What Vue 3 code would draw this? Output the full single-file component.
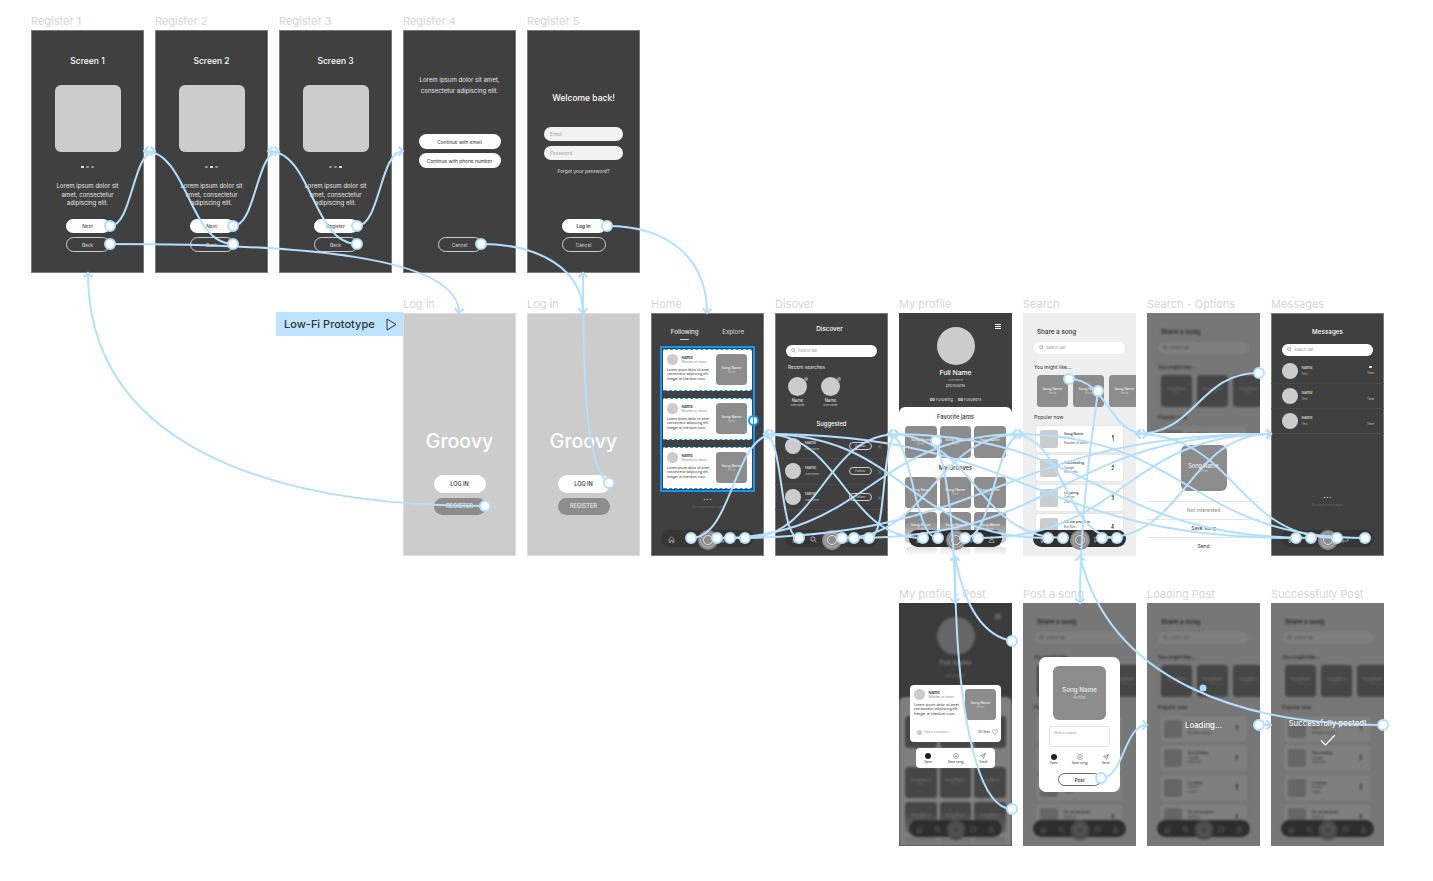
<template>
	<div class="canvas">
		<!-- icon set used by the screens -->
		<svg class="sprite" width="0" height="0">
			<symbol id="i-search" viewBox="0 0 12 12">
				<circle cx="5" cy="5" r="3.6" fill="none" stroke="currentColor" stroke-width="1.2" />
				<path d="M8 8l3 3" stroke="currentColor" stroke-width="1.2" />
			</symbol>
			<symbol id="i-home" viewBox="0 0 12 12">
				<path d="M2 11V5.5L6 2l4 3.5V11H7.5V8h-3v3z" fill="none" stroke="currentColor" stroke-width="1" />
			</symbol>
			<symbol id="i-chat" viewBox="0 0 12 12">
				<path d="M1.5 2h9v6.5H4.5L1.5 11z" fill="none" stroke="currentColor" stroke-width="1" />
			</symbol>
			<symbol id="i-user" viewBox="0 0 12 12">
				<circle cx="6" cy="3.6" r="2.2" fill="none" stroke="currentColor" stroke-width="1" />
				<path d="M1.5 11c.4-3.2 2-4.6 4.5-4.6s4.1 1.4 4.5 4.6z" fill="none" stroke="currentColor" stroke-width="1" />
			</symbol>
			<symbol id="i-down" viewBox="0 0 12 12">
				<circle cx="6" cy="6" r="5" fill="none" stroke="currentColor" stroke-width=".8" />
				<path d="M6 3v5M4 6.2L6 8.2l2-2" fill="none" stroke="currentColor" stroke-width=".8" />
			</symbol>
			<symbol id="i-send" viewBox="0 0 12 12">
				<path d="M11 1L1 5l4 1.8L7 11zM5 6.8L11 1" fill="none" stroke="currentColor" stroke-width=".8" />
			</symbol>
		</svg>

		<div class="proto-tag">
			<span>Low-Fi Prototype</span>
			<svg width="11" height="13" viewBox="0 0 11 13"><path d="M1 1l9 5.5-9 5.5z" fill="none" stroke="#333" stroke-width="1" /></svg>
		</div>

		<div v-for="f in frames" :key="f.x + '-' + f.y" class="slot" :style="{ left: f.x + 'px', top: f.y + 'px' }">
			<div class="label">{{ f.name }}</div>
			<div class="frame" :class="'bg-' + f.kind">
				<!-- onboarding -->
				<div v-if="f.kind === 'intro'" class="col intro">
					<div class="title">{{ f.title }}</div>
					<div class="art"></div>
					<div class="dots">
						<i v-for="n in 3" :key="n" :class="{ on: n - 1 === f.step }"></i>
					</div>
					<p class="blurb">Lorem ipsum dolor sit amet, consectetur adipiscing elit.</p>
					<div class="btn solid next">{{ f.next }}</div>
					<div class="btn ghost back">Back</div>
				</div>

				<div v-else-if="f.kind === 'reg4'" class="col reg4">
					<p class="blurb wide">Lorem ipsum dolor sit amet, consectetur adipiscing elit.</p>
					<div class="btn solid long first">Continue with email</div>
					<div class="btn solid long second">Continue with phone number</div>
					<div class="btn ghost back pushed">Cancel</div>
				</div>

				<div v-else-if="f.kind === 'reg5'" class="col reg5">
					<div class="title">Welcome back!</div>
					<div class="field first">Email</div>
					<div class="field second">Password</div>
					<div class="forgot">Forgot your password?</div>
					<div class="btn solid next pushed strong">Log In</div>
					<div class="btn ghost back">Cancel</div>
				</div>

				<div v-else-if="f.kind === 'login'" class="col login">
					<div class="logo">Groovy</div>
					<div class="lbtn white">LOG IN</div>
					<div class="lbtn grey">REGISTER</div>
				</div>

				<!-- home feed -->
				<div v-else-if="f.kind === 'home'" class="col home">
					<div class="tabs">
						<span class="tab active">Following</span>
						<span class="tab">Explore</span>
					</div>
					<div class="feed">
						<div v-for="n in 3" :key="n" class="post">
							<div class="post-main">
								<div class="post-head">
									<div class="ava"></div>
									<div>
										<div class="pname">Name</div>
										<div class="ptime">Minutes or hours</div>
									</div>
								</div>
								<p class="lorem">Lorem ipsum dolor sit amet, consectetur adipiscing elit. Integer at interdum nunc.</p>
							</div>
							<div class="thumb post-thumb"><b>Song Name</b><span>Artist</span></div>
						</div>
						<div class="selection"><span class="sel-handle"></span></div>
					</div>
					<div class="more">• • •</div>
					<div class="more-note">No more posts yet</div>
				</div>

				<div v-else-if="f.kind === 'discover'" class="col discover">
					<div class="head">Discover</div>
					<div class="search dark-search">
						<svg class="ic"><use href="#i-search" /></svg>
						<span>Search bar</span>
					</div>
					<div class="sub">Recent searches</div>
					<div class="recent">
						<div v-for="n in 2" :key="n" class="recent-item">
							<div class="rc-ava"><i></i></div>
							<div class="rc-name">Name</div>
							<div class="rc-user">username</div>
						</div>
					</div>
					<div class="suggested">Suggested</div>
					<div v-for="n in 3" :key="n" class="sg-row">
						<div class="sg-ava"></div>
						<div class="sg-text">
							<div>Name</div>
							<span>username</span>
						</div>
						<div class="follow">Follow</div>
						<div class="close">×</div>
					</div>
				</div>

				<div v-else-if="f.kind === 'messages'" class="col messages">
					<div class="head">Messages</div>
					<div class="search dark-search">
						<svg class="ic"><use href="#i-search" /></svg>
						<span>Search bar</span>
					</div>
					<div v-for="n in 3" :key="n" class="msg-row">
						<div class="sg-ava"></div>
						<div class="sg-text">
							<div>Name</div>
							<span>Text</span>
						</div>
						<div class="msg-time">
							<i :class="{ unread: n === 1 }"></i>
							<span>Time</span>
						</div>
					</div>
					<div class="more">• • •</div>
					<div class="more-note">No more messages</div>
				</div>

				<!-- screens with a dimmed base -->
				<div v-if="f.base === 'profile'" class="col base profile" :class="{ blurred: f.dim }">
					<div class="burger"><i></i><i></i><i></i></div>
					<div class="pf-top">
						<div class="pf-ava"></div>
						<div class="pf-name">Full Name</div>
						<div class="pf-user">username</div>
						<div class="pf-pro">pronouns</div>
						<div class="pf-count"><b>00</b> Following <b class="sp">00</b> Followers</div>
					</div>
					<div class="sheet">
						<div class="sheet-title">Favorite jams</div>
						<div class="grid">
							<div v-for="n in 3" :key="n" class="thumb"><b>Song Name</b><span>Artist</span></div>
						</div>
						<div class="sheet-title grooves">My Grooves</div>
						<div class="grid">
							<div v-for="n in 9" :key="n" class="thumb">
								<template v-if="n <= 6"><b>Song Name</b><span>Artist</span></template>
							</div>
						</div>
						<div class="fade"></div>
					</div>
				</div>

				<div v-if="f.base === 'share'" class="col base share" :class="{ blurred: f.dim }">
					<div class="head left">Share a song</div>
					<div class="search light-search">
						<svg class="ic"><use href="#i-search" /></svg>
						<span>Search bar</span>
					</div>
					<div class="sec first-sec">You might like...</div>
					<div class="suggest">
						<div v-for="n in 3" :key="n" class="thumb"><b>Song Name</b><span>Artist</span></div>
					</div>
					<div class="sec pop-sec">Popular now</div>
					<div v-for="s in popular" :key="s.rank" class="pop">
						<div class="pop-art"></div>
						<div class="pop-text">
							<b>{{ s.title }}</b>
							<span>{{ s.artist }}</span>
							<span>{{ s.posts }}</span>
						</div>
						<div class="pop-rank"><i></i>{{ s.rank }}</div>
					</div>
				</div>

				<div v-if="f.nav" class="nav" :class="{ blurred: f.dim }">
					<svg class="nav-ic"><use href="#i-home" /></svg>
					<svg class="nav-ic"><use href="#i-search" /></svg>
					<div class="disc"><i></i></div>
					<svg class="nav-ic"><use href="#i-chat" /></svg>
					<svg class="nav-ic"><use href="#i-user" /></svg>
				</div>

				<div v-if="f.dim" class="dim"></div>

				<!-- overlays on top of the dim -->
				<div v-if="f.kind === 'options'" class="opt-sheet">
					<div class="thumb opt-thumb"><b>Song Name</b><span>Artist</span></div>
					<div class="opt muted">Not interested</div>
					<div class="opt">Save song</div>
					<div class="opt">Send</div>
				</div>

				<div v-if="f.kind === 'profilePost'" class="pp">
					<div class="pp-card">
						<div class="post">
							<div class="post-main">
								<div class="post-head">
									<div class="ava"></div>
									<div>
										<div class="pname">Name</div>
										<div class="ptime">Minutes or hours</div>
									</div>
								</div>
								<p class="lorem">Lorem ipsum dolor sit amet, consectetur adipiscing elit. Integer at interdum nunc.</p>
							</div>
							<div class="thumb post-thumb"><b>Song Name</b><span>Artist</span></div>
						</div>
						<div class="pp-foot">
							<i class="mini-ava"></i>
							<span>Add a comment...</span>
							<em>00 likes</em>
							<svg width="6" height="6" viewBox="0 0 12 12"><path d="M6 11L1.5 6.2C-.5 3.5 3.5-.5 6 3c2.500-3.500 6.500.5 4.500 3.200z" fill="none" stroke="#555" stroke-width="1" /></svg>
						</div>
					</div>
					<div class="pp-actions">
						<div v-for="a in actions" :key="a.name" class="act">
							<svg v-if="a.icon" class="act-ic"><use :href="'#' + a.icon" /></svg>
							<i v-else class="act-open"></i>
							<span>{{ a.name }}</span>
						</div>
					</div>
				</div>

				<div v-if="f.kind === 'post'" class="compose">
					<div class="thumb big"><b>Song Name</b><span>Artist</span></div>
					<div class="caption">Write a caption</div>
					<div class="compose-acts">
						<div v-for="a in actions" :key="a.name" class="act">
							<svg v-if="a.icon" class="act-ic"><use :href="'#' + a.icon" /></svg>
							<i v-else class="act-open"></i>
							<span>{{ a.name }}</span>
						</div>
					</div>
					<div class="post-btn">Post</div>
				</div>

				<div v-if="f.kind === 'loading'" class="status">Loading...</div>
				<div v-if="f.kind === 'success'" class="status done">
					<span>Successfully posted!</span>
					<svg width="16" height="12" viewBox="0 0 16 12"><path d="M1 6.5L5.5 11 15 1" fill="none" stroke="#fff" stroke-width="1.2" /></svg>
				</div>
			</div>
		</div>

		<!-- prototype connections drawn above the frames -->
		<svg class="wires" width="1433" height="881">
			<path v-for="(w, i) in wires" :key="'w' + i" :d="w.d" class="wire" />
			<path v-for="(w, i) in wires" :key="'a' + i" :d="w.arrow" class="wire" />
			<circle v-for="(w, i) in wires" :key="'h' + i" :cx="w.from[0]" :cy="w.from[1]" r="5" class="knob" />
			<circle cx="1203" cy="688" r="3.5" fill="#a9dbff" />
		</svg>
	</div>
</template>

<script setup>
const frames = [
	{ name: 'Register 1', x: 31, y: 30, kind: 'intro', title: 'Screen 1', step: 0, next: 'Next' },
	{ name: 'Register 2', x: 155, y: 30, kind: 'intro', title: 'Screen 2', step: 1, next: 'Next' },
	{ name: 'Register 3', x: 279, y: 30, kind: 'intro', title: 'Screen 3', step: 2, next: 'Register' },
	{ name: 'Register 4', x: 403, y: 30, kind: 'reg4' },
	{ name: 'Register 5', x: 527, y: 30, kind: 'reg5' },
	{ name: 'Log in', x: 403, y: 313, kind: 'login' },
	{ name: 'Log in', x: 527, y: 313, kind: 'login' },
	{ name: 'Home', x: 651, y: 313, kind: 'home', nav: true },
	{ name: 'Disover', x: 775, y: 313, kind: 'discover', nav: true },
	{ name: 'My profile', x: 899, y: 313, kind: 'plain', base: 'profile', nav: true },
	{ name: 'Search', x: 1023, y: 313, kind: 'light', base: 'share', nav: true },
	{ name: 'Search - Options', x: 1147, y: 313, kind: 'options', base: 'share', dim: true },
	{ name: 'Messages', x: 1271, y: 313, kind: 'messages', nav: true },
	{ name: 'My profile - Post', x: 899, y: 603, kind: 'profilePost', base: 'profile', nav: true, dim: true },
	{ name: 'Post a song', x: 1023, y: 603, kind: 'post', base: 'share', nav: true, dim: true },
	{ name: 'Loading Post', x: 1147, y: 603, kind: 'loading', base: 'share', nav: true, dim: true },
	{ name: 'Successfully Post', x: 1271, y: 603, kind: 'success', base: 'share', nav: true, dim: true },
]

const popular = [
	{ rank: 1, title: 'Song Name', artist: 'Artist', posts: 'Number of posts' },
	{ rank: 2, title: 'Succeeding', artist: 'Tonight', posts: 'Artist info' },
	{ rank: 3, title: 'Locating', artist: 'Creator', posts: 'Listen' },
	{ rank: 4, title: 'On me program', artist: 'Bot Ruin', posts: 'Listen' },
]

const actions = [
	{ name: 'Open' },
	{ name: 'Save song', icon: 'i-down' },
	{ name: 'Send', icon: 'i-send' },
]

// arrow head at the end of a connection
const chevron = (x, y, dir) => {
	const s = 4.5
	if (dir === 'right') return `M${x - s} ${y - s}L${x} ${y}L${x - s} ${y + s}`
	if (dir === 'left') return `M${x + s} ${y - s}L${x} ${y}L${x + s} ${y + s}`
	if (dir === 'down') return `M${x - s} ${y - s}L${x} ${y}L${x + s} ${y - s}`
	return `M${x - s} ${y + s}L${x} ${y}L${x + s} ${y + s}`
}

// connection that leaves and lands sideways
const side = (x1, y1, x2, y2) => {
	const forward = x2 > x1
	const dx = Math.max(Math.abs(x2 - x1) / 2, 20) * (forward ? 1 : -1)
	return {
		from: [x1, y1],
		d: `M${x1} ${y1}C${x1 + dx} ${y1} ${x2 - dx} ${y2} ${x2} ${y2}`,
		arrow: chevron(x2, y2, forward ? 'right' : 'left'),
	}
}

const free = (x1, y1, c, x2, y2, dir) => ({
	from: [x1, y1],
	d: `M${x1} ${y1}C${c} ${x2} ${y2}`,
	arrow: chevron(x2, y2, dir),
})

const HOME_R = 764
const DISC_L = 775
const DISC_R = 888
const PROF_L = 899
const PROF_R = 1012
const SEARCH_L = 1023
const SEARCH_R = 1136
const OPT_L = 1147
const MSG_L = 1271

const navLinks = [
	[691, DISC_L], [717, SEARCH_L], [730, MSG_L], [745, PROF_L],
	[799, HOME_R], [842, SEARCH_L], [854, MSG_L], [869, PROF_L],
	[923, HOME_R], [938, DISC_R], [965, SEARCH_L], [978, MSG_L],
	[1048, HOME_R], [1063, DISC_R], [1102, MSG_L], [1117, PROF_R],
	[1296, HOME_R], [1311, DISC_R], [1337, SEARCH_R], [1365, PROF_R],
]

const wires = [
	side(110, 226, 155, 151),
	side(233, 244, 144, 151),
	side(233, 226, 279, 151),
	side(357, 244, 268, 151),
	side(357, 226, 403, 151),
	free(110, 244, '300 244 459 256', 459, 313, 'down'),
	free(485, 506, '260 506 88 440', 88, 273, 'up'),
	free(481, 244, '540 244 583 270', 583, 313, 'down'),
	free(609, 483, '588 470 583 400', 583, 273, 'up'),
	free(607, 226, '670 226 707 260', 707, 313, 'down'),
	...navLinks.map(([x, t]) => side(x, 538, t, 434)),
	free(936, 441, '950 480 955 550', 955, 603, 'down'),
	free(1098, 391, '1090 450 1080 520', 1080, 603, 'down'),
	side(1069, 379, OPT_L, 434),
	side(1259, 373, SEARCH_R, 434),
	free(1012, 641, '985 636 965 610', 955, 556, 'up'),
	free(1012, 809, '975 809 955 700', 955, 556, 'up'),
	free(1383, 725, '1240 725 1110 680', 1080, 556, 'up'),
	side(1101, 778, OPT_L, 725),
	side(1259, 725, 1271, 725),
]
</script>

<style scoped>
.canvas {
	position: relative;
	width: 1433px;
	height: 881px;
	overflow: hidden;
	background: #fff;
	font-family: Inter, 'Liberation Sans', sans-serif;
}

.sprite {
	position: absolute;
}

.proto-tag {
	position: absolute;
	left: 276px;
	top: 312px;
	width: 127px;
	height: 24px;
	box-sizing: border-box;
	padding: 0 6px 0 8px;
	background: #bde3ff;
	color: #333;
	font-size: 11px;
	font-weight: 500;
	display: flex;
	align-items: center;
	justify-content: space-between;
}

.slot {
	position: absolute;
	width: 113px;
}

.label {
	position: absolute;
	left: 0;
	top: -16px;
	font-size: 11px;
	line-height: 14px;
	color: #d6d6d6;
	white-space: nowrap;
}

.frame {
	position: relative;
	width: 113px;
	height: 243px;
	overflow: hidden;
	background: #404040;
	color: #fff;
	box-shadow: inset 0 0 0 1px #7a7a7a;
}

.bg-login {
	background: #ccc;
	box-shadow: inset 0 0 0 1px #ddd;
}

.bg-light,
.bg-options,
.bg-post,
.bg-loading,
.bg-success {
	background: #eee;
	box-shadow: none;
}

.col {
	display: flex;
	flex-direction: column;
	height: 100%;
	box-sizing: border-box;
}

.blurred {
	filter: blur(1px);
}

.dim {
	position: absolute;
	inset: 0;
	background: rgba(0, 0, 0, 0.5);
}

/* register screens */
.intro,
.reg4,
.reg5 {
	align-items: center;
	padding-bottom: 21px;
}

.intro {
	padding-top: 26px;
}

.title {
	font-size: 8.5px;
	line-height: 10px;
	font-weight: 500;
}

.art {
	width: 66px;
	height: 67px;
	margin-top: 19px;
	background: #ccc;
	border-radius: 6px;
}

.dots {
	display: flex;
	gap: 2.5px;
	margin-top: 14px;
}

.dots i {
	width: 2.5px;
	height: 2.5px;
	border-radius: 50%;
	background: #999;
}

.dots i.on {
	background: #fff;
}

.blurb {
	width: 68px;
	margin: 14px 0 0;
	font-size: 6.1px;
	line-height: 8.7px;
	text-align: center;
	color: #e8e8e8;
}

.blurb.wide {
	width: 100px;
	margin-top: 0;
	line-height: 11px;
}

.reg4 {
	padding-top: 44px;
}

.btn {
	display: flex;
	align-items: center;
	justify-content: center;
	box-sizing: border-box;
	border-radius: 8px;
	font-size: 4.8px;
}

.solid {
	background: #fff;
	color: #333;
}

.ghost {
	border: 0.5px solid #ccc;
	color: #ddd;
}

.next {
	width: 44px;
	height: 14px;
	margin-top: 11px;
}

.back {
	width: 44px;
	height: 15px;
	margin-top: 4px;
}

.long {
	width: 82px;
	height: 15px;
}

.first {
	margin-top: 38px;
}

.second {
	margin-top: 4px;
}

.pushed {
	margin-top: auto;
}

.strong {
	font-weight: 600;
}

.reg5 {
	padding-top: 63px;
}

.field {
	width: 79px;
	height: 14px;
	box-sizing: border-box;
	padding-left: 6px;
	background: #f2f2f2;
	border-radius: 7px;
	color: #aaa;
	font-size: 4.8px;
	line-height: 14px;
}

.field.first {
	margin-top: 24px;
}

.field.second {
	margin-top: 5px;
}

.forgot {
	margin-top: 8px;
	font-size: 4.8px;
	line-height: 6px;
	color: #ddd;
}

/* log in */
.login {
	align-items: center;
	padding-top: 116px;
}

.logo {
	font-size: 19.5px;
	line-height: 24px;
	font-weight: 500;
}

.lbtn {
	width: 52px;
	height: 17.5px;
	display: flex;
	align-items: center;
	justify-content: center;
	border-radius: 9px;
	font-size: 5.6px;
	font-weight: 500;
}

.lbtn.white {
	margin-top: 22px;
	background: #fff;
	color: #333;
}

.lbtn.grey {
	margin-top: 5px;
	background: #8c8c8c;
	color: #eee;
}

/* shared bits */
.thumb {
	display: flex;
	flex-direction: column;
	align-items: center;
	justify-content: center;
	background: #8c8c8c;
	border-radius: 3.5px;
	color: #eee;
	font-size: 3px;
	line-height: 4px;
	overflow: hidden;
	white-space: nowrap;
}

.thumb b {
	font-weight: 500;
	font-size: 3.6px;
}

.thumb span {
	color: #ccc;
}

.more {
	margin-top: 9px;
	font-size: 3.5px;
	line-height: 5px;
	text-align: center;
	color: #eee;
}

.more-note {
	margin-top: 2px;
	font-size: 3.5px;
	line-height: 5px;
	text-align: center;
	color: #6a6a6a;
}

.head {
	font-size: 6.3px;
	line-height: 8px;
	font-weight: 500;
	text-align: center;
}

.discover .head {
	padding-right: 4px;
}

.head.left {
	text-align: left;
	color: #333;
	padding-left: 3px;
}

.search {
	display: flex;
	align-items: center;
	gap: 2px;
	width: 91px;
	height: 11.5px;
	box-sizing: border-box;
	padding-left: 5px;
	background: #fff;
	border-radius: 6px;
	color: #999;
	font-size: 3.8px;
}

.dark-search {
	align-self: center;
	margin-top: 12px;
}

.light-search {
	margin-top: 6px;
}

.ic {
	width: 5px;
	height: 5px;
	color: #666;
}

/* home */
.home {
	padding-top: 15px;
}

.tabs {
	display: flex;
	justify-content: space-around;
	padding: 0 8px;
	font-size: 6.2px;
	line-height: 8px;
	color: #ddd;
}

.tab.active {
	color: #fff;
	position: relative;
}

.tab.active::after {
	content: '';
	position: absolute;
	left: 33%;
	right: 33%;
	bottom: -3px;
	height: 0.5px;
	background: #ccc;
}

.feed {
	position: relative;
	display: flex;
	flex-direction: column;
	gap: 7px;
	margin: 13px 12px 0;
}

.post {
	display: flex;
	gap: 3px;
	height: 42px;
	box-sizing: border-box;
	padding: 4px 5px 4px 4px;
	background: #fff;
	border-radius: 2px;
	color: #333;
}

.feed .post {
	border-top: 1px dashed #0d99ff;
	border-bottom: 1px dashed #0d99ff;
}

.post-main {
	flex: 1;
	min-width: 0;
}

.post-head {
	display: flex;
	align-items: center;
	gap: 4px;
}

.ava {
	flex: none;
	width: 10.5px;
	height: 10.5px;
	border-radius: 50%;
	background: #ccc;
}

.pname {
	font-size: 4px;
	line-height: 5px;
	font-weight: 600;
}

.ptime {
	font-size: 3.2px;
	line-height: 4px;
	color: #888;
	white-space: nowrap;
}

.lorem {
	margin: 3px 0 0;
	font-size: 3.3px;
	line-height: 4.7px;
}

.post-thumb {
	flex: none;
	width: 31px;
	height: 31px;
}

.selection {
	position: absolute;
	inset: -3px;
	border: 2px solid #0d99ff;
}

.sel-handle {
	position: absolute;
	right: -6px;
	top: 67px;
	width: 7px;
	height: 7px;
	border: 2px solid #0d99ff;
	border-radius: 50%;
	background: linear-gradient(90deg, #fff 40%, #0d99ff 40%, #0d99ff 60%, #fff 60%);
}

/* bottom bar */
.nav {
	position: absolute;
	left: 10px;
	right: 10px;
	bottom: 9px;
	height: 17.5px;
	display: grid;
	grid-template-columns: repeat(5, 18px);
	justify-content: center;
	justify-items: center;
	align-items: center;
	background: #2f2f2f;
	border-radius: 9px;
	color: #ddd;
}

.nav.blurred {
	background: #5c5c5c;
}

.bg-home .nav,
.bg-discover .nav,
.bg-messages .nav {
	background: #363636;
}

.nav-ic {
	width: 7px;
	height: 7px;
}

.disc {
	width: 20px;
	height: 20px;
	display: flex;
	align-items: center;
	justify-content: center;
	border-radius: 50%;
	background: #8c8c8c;
}

.disc i {
	width: 10px;
	height: 10px;
	box-sizing: border-box;
	border: 0.5px solid #ddd;
	border-radius: 50%;
	box-shadow: 0 0 0 2px #8c8c8c, 0 0 0 2.5px #ccc;
}

/* discover */
.discover {
	padding-top: 12px;
}

.sub {
	margin: 7px 0 0 13px;
	font-size: 4.7px;
	line-height: 6px;
	color: #e8e8e8;
}

.recent {
	display: flex;
	gap: 14px;
	margin: 7px 0 0 13px;
}

.recent-item {
	width: 19px;
	display: flex;
	flex-direction: column;
	align-items: center;
}

.rc-ava {
	position: relative;
	width: 19px;
	height: 19px;
	border-radius: 50%;
	background: #ccc;
}

.rc-ava i {
	position: absolute;
	right: -1px;
	top: 0;
	width: 4px;
	height: 4px;
	border-radius: 50%;
	background: #8c8c8c;
}

.rc-name {
	margin-top: 2px;
	font-size: 4.2px;
	line-height: 5px;
	color: #eee;
}

.rc-user {
	font-size: 3px;
	line-height: 4px;
	color: #ccc;
}

.suggested {
	margin: 13px 0 6px;
	font-size: 5.8px;
	line-height: 8px;
	font-weight: 500;
	text-align: center;
}

.sg-row {
	display: flex;
	align-items: center;
	height: 25.5px;
	box-sizing: border-box;
	padding: 0 6px 0 10px;
	border-bottom: 0.5px solid #4a4a4a;
}

.sg-ava {
	flex: none;
	width: 16px;
	height: 16px;
	border-radius: 50%;
	background: #ccc;
}

.sg-text {
	flex: 1;
	margin-left: 4px;
	font-size: 4px;
	line-height: 6px;
	color: #eee;
}

.sg-text span {
	font-size: 3px;
	color: #bbb;
}

.follow {
	width: 23px;
	height: 8px;
	box-sizing: border-box;
	border: 0.5px solid #ccc;
	border-radius: 4px;
	font-size: 3.2px;
	line-height: 7px;
	text-align: center;
	color: #ddd;
}

.close {
	margin-left: 5px;
	font-size: 8px;
	line-height: 8px;
	color: #777;
}

/* messages */
.messages {
	padding-top: 15px;
}

.messages .dark-search {
	margin-top: 8px;
}

.msg-row {
	display: flex;
	align-items: center;
	flex: none;
	height: 25.3px;
	box-sizing: border-box;
	padding: 0 10px 0 10.5px;
	border-bottom: 0.5px solid #4a4a4a;
}

.search + .msg-row {
	margin-top: 3px;
}

.msg-time {
	display: flex;
	flex-direction: column;
	align-items: center;
	gap: 3px;
	font-size: 3px;
	color: #ccc;
}

.msg-time i {
	width: 2.5px;
	height: 2.5px;
	border-radius: 50%;
}

.msg-time i.unread {
	background: #fff;
}

.messages .more {
	margin-top: 62px;
}

/* my profile */
.base.profile {
	background: #404040;
}

.base.profile.blurred {
	background: #787878;
}

.burger {
	position: absolute;
	right: 11px;
	top: 11px;
	display: flex;
	flex-direction: column;
	gap: 1.3px;
}

.burger i {
	width: 6px;
	height: 0.7px;
	background: #fff;
}

.pf-top {
	flex: none;
	height: 94px;
	display: flex;
	flex-direction: column;
	align-items: center;
	padding-top: 14px;
	box-sizing: border-box;
}

.pf-ava {
	width: 38px;
	height: 38px;
	border-radius: 50%;
	background: #ccc;
}

.pf-name {
	margin-top: 4px;
	font-size: 6.8px;
	line-height: 8px;
	font-weight: 500;
}

.pf-user {
	margin-top: 1px;
	font-size: 3.2px;
	line-height: 4px;
	color: #aaa;
}

.pf-pro {
	margin-top: 1px;
	font-size: 4.3px;
	line-height: 6px;
	color: #ddd;
}

.pf-count {
	margin-top: 8px;
	font-size: 3.8px;
	line-height: 5px;
	color: #ddd;
}

.pf-count b {
	font-weight: 600;
	color: #fff;
}

.pf-count .sp {
	margin-left: 4px;
}

.sheet {
	position: relative;
	flex: 1;
	padding: 6px 6px 0;
	background: #fff;
	border-radius: 6px 6px 0 0;
	overflow: hidden;
}

.sheet-title {
	font-size: 5.8px;
	line-height: 8px;
	font-weight: 500;
	text-align: center;
	color: #333;
}

.grooves {
	margin-top: 6px;
}

.grid {
	display: grid;
	grid-template-columns: repeat(3, 31.5px);
	grid-auto-rows: 31.5px;
	gap: 3.5px 3px;
	margin-top: 5px;
}

.fade {
	position: absolute;
	left: 0;
	right: 0;
	bottom: 0;
	height: 34px;
	background: linear-gradient(rgba(255, 255, 255, 0), #fff);
}

/* share */
.base.share {
	padding: 15px 0 0 11px;
	background: #eee;
	color: #333;
}

.sec {
	font-size: 5px;
	line-height: 6px;
	color: #333;
}

.first-sec {
	margin-top: 10px;
}

.suggest {
	display: flex;
	gap: 5px;
	margin: 5px 0 0 3px;
}

.suggest .thumb {
	flex: none;
	width: 31px;
	height: 32px;
}

.pop-sec {
	margin-top: 7px;
}

.pop {
	display: flex;
	align-items: center;
	flex: none;
	width: 87px;
	height: 26px;
	box-sizing: border-box;
	margin: 3.5px 0 0 2px;
	padding: 0 9px 0 4px;
	background: #fff;
	border-radius: 3px;
	box-shadow: 0 0 2px rgba(0, 0, 0, 0.12);
}

.pop-sec + .pop {
	margin-top: 6px;
}

.pop-art {
	flex: none;
	width: 18px;
	height: 18px;
	border-radius: 2px;
	background: #ccc;
}

.pop-text {
	flex: 1;
	display: flex;
	flex-direction: column;
	margin-left: 6px;
	font-size: 3px;
	line-height: 4.6px;
	color: #555;
}

.pop-text b {
	font-size: 3.5px;
	font-weight: 500;
	color: #333;
}

.pop-rank {
	display: flex;
	flex-direction: column;
	align-items: center;
	font-size: 4.5px;
	font-weight: 600;
	line-height: 5px;
}

.pop-rank i {
	width: 2px;
	height: 1.5px;
	background: #777;
}

/* overlays */
.opt-sheet {
	position: absolute;
	left: 0;
	right: 0;
	bottom: 0;
	height: 123px;
	box-sizing: border-box;
	padding-top: 12px;
	display: flex;
	flex-direction: column;
	align-items: center;
	background: #fff;
	border-radius: 3px 3px 0 0;
	color: #333;
}

.opt-thumb {
	width: 46px;
	height: 46px;
	margin-bottom: 10px;
	border-radius: 6px;
}

.opt-thumb b {
	font-size: 5.5px;
	line-height: 6px;
}

.opt-thumb span {
	font-size: 3.5px;
}

.opt {
	align-self: stretch;
	height: 17px;
	border-top: 0.5px solid #e4e4e4;
	font-size: 5px;
	line-height: 17px;
	text-align: center;
}

.opt.muted {
	color: #888;
}

.pp {
	position: absolute;
	left: 11px;
	top: 82px;
	width: 91px;
	display: flex;
	flex-direction: column;
	align-items: center;
	gap: 6px;
}

.pp-card {
	width: 100%;
	height: 57px;
	background: #fff;
	border-radius: 4px;
}

.pp-card .post {
	height: 43px;
	background: transparent;
}

.pp-card .lorem {
	font-size: 3.5px;
	line-height: 4.8px;
}

.pp-foot {
	display: flex;
	align-items: center;
	gap: 2px;
	padding: 1px 3px 0 7px;
	font-size: 3.2px;
	color: #999;
}

.pp-foot span {
	flex: 1;
}

.pp-foot em {
	font-style: normal;
	color: #333;
}

.mini-ava {
	width: 5px;
	height: 5px;
	border-radius: 50%;
	background: #ccc;
}

.pp-actions {
	display: flex;
	justify-content: space-around;
	width: 79px;
	height: 20px;
	align-items: center;
	background: #fff;
	border-radius: 4px;
}

.act {
	display: flex;
	flex-direction: column;
	align-items: center;
	gap: 1px;
	font-size: 3.2px;
	line-height: 4px;
	color: #333;
}

.act-ic {
	width: 6px;
	height: 6px;
}

.act-open {
	width: 6px;
	height: 6px;
	border-radius: 50%;
	background: #222;
}

.compose {
	position: absolute;
	left: 16px;
	top: 54px;
	width: 81px;
	height: 135px;
	box-sizing: border-box;
	padding-top: 9px;
	display: flex;
	flex-direction: column;
	align-items: center;
	background: #fff;
	border-radius: 7px;
	color: #333;
}

.big {
	width: 53px;
	height: 54px;
	border-radius: 6px;
}

.big b {
	font-size: 6.3px;
	line-height: 8px;
}

.big span {
	font-size: 5px;
	line-height: 6px;
}

.caption {
	width: 61px;
	height: 21px;
	box-sizing: border-box;
	margin-top: 6px;
	padding: 4px;
	border: 0.5px solid #e4e4e4;
	border-radius: 3px;
	font-size: 3.2px;
	color: #999;
}

.compose-acts {
	display: flex;
	justify-content: space-between;
	width: 60px;
	margin-top: 7px;
}

.post-btn {
	width: 43px;
	height: 12.5px;
	box-sizing: border-box;
	margin-top: 8px;
	border: 0.5px solid #666;
	border-radius: 7px;
	font-size: 4.8px;
	font-weight: 500;
	line-height: 12px;
	text-align: center;
}

.status {
	position: absolute;
	left: 0;
	right: 0;
	top: 115px;
	font-size: 7.8px;
	line-height: 14px;
	font-weight: 500;
	text-align: center;
}

.status.done {
	top: 113px;
	display: flex;
	flex-direction: column;
	align-items: center;
	gap: 4px;
	white-space: nowrap;
}

/* connections */
.wires {
	position: absolute;
	left: 0;
	top: 0;
	pointer-events: none;
}

.wire {
	fill: none;
	stroke: #b5dfff;
	stroke-width: 2;
}

.knob {
	fill: #fff;
	stroke: #b5dfff;
	stroke-width: 2;
}
</style>
